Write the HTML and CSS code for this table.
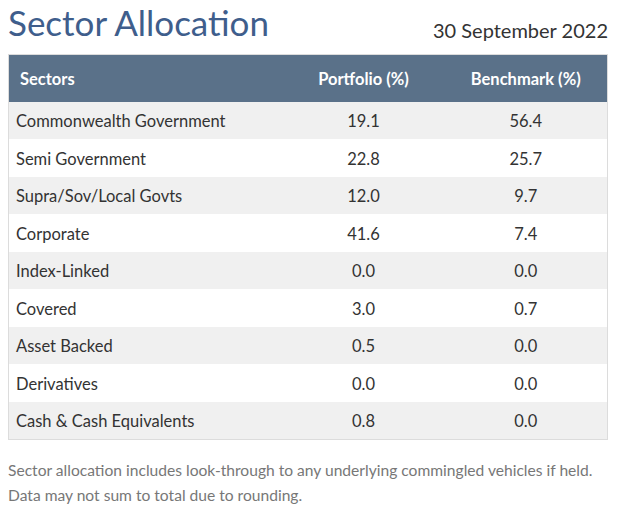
FILE: index.html
```html
<!DOCTYPE html>
<html>
<head>
<meta charset="utf-8">
<link rel="stylesheet" href="styles.css">
</head>
<body>
<div class="page">
  <div class="top">
    <h1 class="title">Sector Allocation</h1>
    <div class="date">30 September 2022</div>
  </div>
  <table class="alloc">
    <thead>
      <tr><th class="c1">Sectors</th><th class="c2">Portfolio (%)</th><th class="c3">Benchmark (%)</th></tr>
    </thead>
    <tbody>
      <tr><td class="c1">Commonwealth Government</td><td class="c2">19.1</td><td class="c3">56.4</td></tr>
      <tr><td class="c1">Semi Government</td><td class="c2">22.8</td><td class="c3">25.7</td></tr>
      <tr><td class="c1">Supra/Sov/Local Govts</td><td class="c2">12.0</td><td class="c3">9.7</td></tr>
      <tr><td class="c1">Corporate</td><td class="c2">41.6</td><td class="c3">7.4</td></tr>
      <tr><td class="c1">Index-Linked</td><td class="c2">0.0</td><td class="c3">0.0</td></tr>
      <tr><td class="c1">Covered</td><td class="c2">3.0</td><td class="c3">0.7</td></tr>
      <tr><td class="c1">Asset Backed</td><td class="c2">0.5</td><td class="c3">0.0</td></tr>
      <tr><td class="c1">Derivatives</td><td class="c2">0.0</td><td class="c3">0.0</td></tr>
      <tr><td class="c1">Cash &amp; Cash Equivalents</td><td class="c2">0.8</td><td class="c3">0.0</td></tr>
    </tbody>
  </table>
  <p class="note">Sector allocation includes look-through to any underlying commingled vehicles if held.<br>Data may not sum to total due to rounding.</p>
</div>
</body>
</html>
```
FILE: styles.css
```css
html, body {
  margin: 0;
  padding: 0;
  background: #ffffff;
}
body {
  font-family: "Lato", "Liberation Sans", sans-serif;
  color: #333333;
}
.page {
  width: 601px;
  padding: 0 0 0 8px;
}
.top {
  display: flex;
  justify-content: space-between;
  align-items: flex-end;
  height: 54px;
}
.title {
  margin: 0;
  font-weight: 400;
  font-size: 35px;
  line-height: 40px;
  color: #3f5e8c;
  padding-bottom: 12px;
}
.date {
  font-size: 20px;
  line-height: 24px;
  color: #333;
  padding-bottom: 12px;
  padding-right: 1px;
}
.alloc {
  width: 600px;
  table-layout: fixed;
  border-collapse: collapse;
  border: 1px solid #dcdcdc;
  font-size: 16.5px;
}
.alloc th,
.alloc td {
  box-sizing: border-box;
  padding: 0;
}
.alloc th {
  background: #5a7189;
  color: #ffffff;
  font-weight: 700;
  font-size: 16.5px;
  height: 47px;
  padding-top: 1px;
}
.alloc td {
  height: 37.5px;
  padding-top: 2px;
}
.alloc tbody tr:nth-child(odd) td {
  background: #f0f0f0;
}
.c1 {
  text-align: left;
  width: 274px;
}
.alloc th.c1 {
  padding-left: 11px;
}
.alloc td.c1 {
  padding-left: 7px;
}
.c2 {
  text-align: center;
  width: 162px;
}
.c3 {
  text-align: center;
}
.note {
  margin: 18px 0 0 0;
  font-size: 15.6px;
  line-height: 25px;
  color: #777777;
}
```
